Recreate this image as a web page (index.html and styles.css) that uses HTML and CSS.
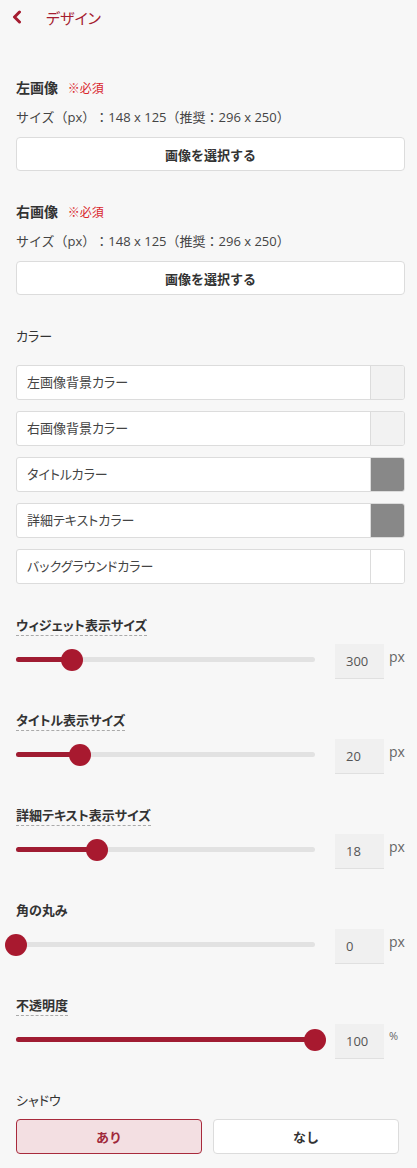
FILE: index.html
```html
<!DOCTYPE html>
<html lang="ja">
<head>
    <meta charset="UTF-8">
    <meta name="viewport" content="width=device-width, initial-scale=1.0">
    <title>デザイン</title>
    <link rel="stylesheet" href="styles.css">
</head>
<body>

<div class="header">
    <svg class="back" width="12" height="14" viewBox="0 0 12 14">
        <path d="M8.5 2 L3.5 7 L8.5 12" fill="none" stroke="#a51c30" stroke-width="3" stroke-linecap="round" stroke-linejoin="round"/>
    </svg>
    <span class="header-title">デザイン</span>
</div>

<div class="panel">
    <div class="block image-block first">
        <div class="title">左画像 <span class="req">※必須</span></div>
        <div class="size-note">サイズ（px）：148 x 125（推奨：296 x 250）</div>
        <button class="select-btn">画像を選択する</button>
    </div>

    <div class="block image-block">
        <div class="title">右画像 <span class="req">※必須</span></div>
        <div class="size-note">サイズ（px）：148 x 125（推奨：296 x 250）</div>
        <button class="select-btn">画像を選択する</button>
    </div>

    <div class="block">
        <div class="plain-label">カラー</div>
        <div class="color-list">
            <div class="color-row"><span>左画像背景カラー</span><i class="swatch light"></i></div>
            <div class="color-row"><span>右画像背景カラー</span><i class="swatch light"></i></div>
            <div class="color-row"><span>タイトルカラー</span><i class="swatch gray"></i></div>
            <div class="color-row"><span>詳細テキストカラー</span><i class="swatch gray"></i></div>
            <div class="color-row"><span>バックグラウンドカラー</span><i class="swatch white"></i></div>
        </div>
    </div>

    <div class="block slider-block">
        <div class="slider-label"><span class="dotted">ウィジェット表示サイズ</span></div>
        <div class="slider-row">
            <div class="track"><div class="fill" style="width: 18.7%"></div><div class="thumb" style="left: 18.7%"></div></div>
            <div class="num">300</div>
            <span class="unit">px</span>
        </div>
    </div>

    <div class="block slider-block">
        <div class="slider-label"><span class="dotted">タイトル表示サイズ</span></div>
        <div class="slider-row">
            <div class="track"><div class="fill" style="width: 21.4%"></div><div class="thumb" style="left: 21.4%"></div></div>
            <div class="num">20</div>
            <span class="unit">px</span>
        </div>
    </div>

    <div class="block slider-block">
        <div class="slider-label"><span class="dotted">詳細テキスト表示サイズ</span></div>
        <div class="slider-row">
            <div class="track"><div class="fill" style="width: 27.1%"></div><div class="thumb" style="left: 27.1%"></div></div>
            <div class="num">18</div>
            <span class="unit">px</span>
        </div>
    </div>

    <div class="block slider-block">
        <div class="slider-label"><span>角の丸み</span></div>
        <div class="slider-row">
            <div class="track"><div class="fill" style="width: 0%"></div><div class="thumb" style="left: 0%"></div></div>
            <div class="num">0</div>
            <span class="unit">px</span>
        </div>
    </div>

    <div class="block slider-block">
        <div class="slider-label"><span class="dotted">不透明度</span></div>
        <div class="slider-row">
            <div class="track"><div class="fill" style="width: 100%"></div><div class="thumb" style="left: 100%"></div></div>
            <div class="num">100</div>
            <span class="unit pct">%</span>
        </div>
    </div>

    <div class="block shadow-block">
        <div class="plain-label">シャドウ</div>
        <div class="toggle">
            <button class="toggle-btn active">あり</button>
            <button class="toggle-btn">なし</button>
        </div>
    </div>
</div>

</body>
</html>
```

FILE: styles.css
```css
body {
    font-family: "Open Sans", "Noto Sans CJK JP", sans-serif;
    font-size: 13px;
    font-feature-settings: "palt";
    color: #333;
    margin: 0;
    background-color: #f7f7f7;
}
.header {
    display: flex;
    align-items: center;
    height: 34px;
    padding-left: 11px;
}
.back {
    display: block;
}
.header-title {
    margin-left: 23px;
    font-size: 15px;
    color: #a51c30;
}
.panel {
    padding: 0 12px 0 16px;
}
.block {
    margin-top: 31px;
}
.block.first {
    margin-top: 44px;
}
.title {
    font-weight: bold;
    font-size: 14px;
    line-height: 20px;
    color: #333;
}
.req {
    font-weight: normal;
    font-size: 12px;
    color: #d9262c;
    margin-left: 6px;
}
.size-note {
    line-height: 20px;
    margin-top: 8px;
    color: #444;
    font-feature-settings: normal;
    text-spacing-trim: space-all;
}
.select-btn {
    display: block;
    width: 100%;
    height: 34px;
    margin-top: 10px;
    background: #fff;
    border: 1px solid #dcdcdc;
    border-radius: 4px;
    font-family: inherit;
    font-size: 13px;
    font-weight: bold;
    color: #333;
}
.plain-label {
    line-height: 20px;
    color: #333;
}
.color-list {
    display: flex;
    flex-direction: column;
    gap: 11px;
    margin-top: 19px;
}
.color-row {
    display: flex;
    height: 35px;
    box-sizing: border-box;
    background: #fff;
    border: 1px solid #dcdcdc;
    border-radius: 3px;
    overflow: hidden;
}
.color-row span {
    flex: 1;
    line-height: 33px;
    padding-left: 10px;
    color: #444;
}
.swatch {
    width: 33px;
    border-left: 1px solid #dcdcdc;
}
.swatch.light { background: #f2f2f2; }
.swatch.gray { background: #888; }
.swatch.white { background: #fff; }
.slider-block {
    margin-top: 31px;
}
.slider-label {
    line-height: 20px;
    font-weight: bold;
}
.dotted {
    border-bottom: 1px dashed #aaa;
    padding-bottom: 1px;
}
.slider-row {
    display: flex;
    align-items: center;
    margin-top: 9px;
}
.track {
    position: relative;
    width: 299px;
    height: 5px;
    border-radius: 3px;
    background: #e2e2e2;
    margin-bottom: 4px;
}
.fill {
    height: 100%;
    border-radius: 3px;
    background: #a01c32;
}
.thumb {
    position: absolute;
    top: 50%;
    width: 22px;
    height: 22px;
    margin: -11px 0 0 -11px;
    border-radius: 50%;
    background: #a8192f;
}
.num {
    width: 49px;
    height: 35px;
    box-sizing: border-box;
    margin-left: 20px;
    padding-left: 11px;
    line-height: 35px;
    background: #f0f0f0;
    border-bottom: 1px solid #e0e0e0;
    color: #555;
}
.unit {
    margin-left: 5px;
    margin-bottom: 10px;
    color: #666;
    font-size: 14px;
}
.unit.pct {
    font-size: 11px;
    margin-bottom: 12px;
}
.shadow-block {
    margin-top: 31px;
}
.toggle {
    display: flex;
    gap: 11px;
    width: 383px;
    margin-top: 9px;
}
.toggle-btn {
    flex: 1;
    height: 35px;
    background: #fff;
    border: 1px solid #dcdcdc;
    border-radius: 4px;
    font-family: inherit;
    font-size: 13px;
    font-weight: bold;
    color: #333;
}
.toggle-btn.active {
    background: #f3dfe2;
    border-color: #a82a3c;
    color: #a0283a;
}
```
